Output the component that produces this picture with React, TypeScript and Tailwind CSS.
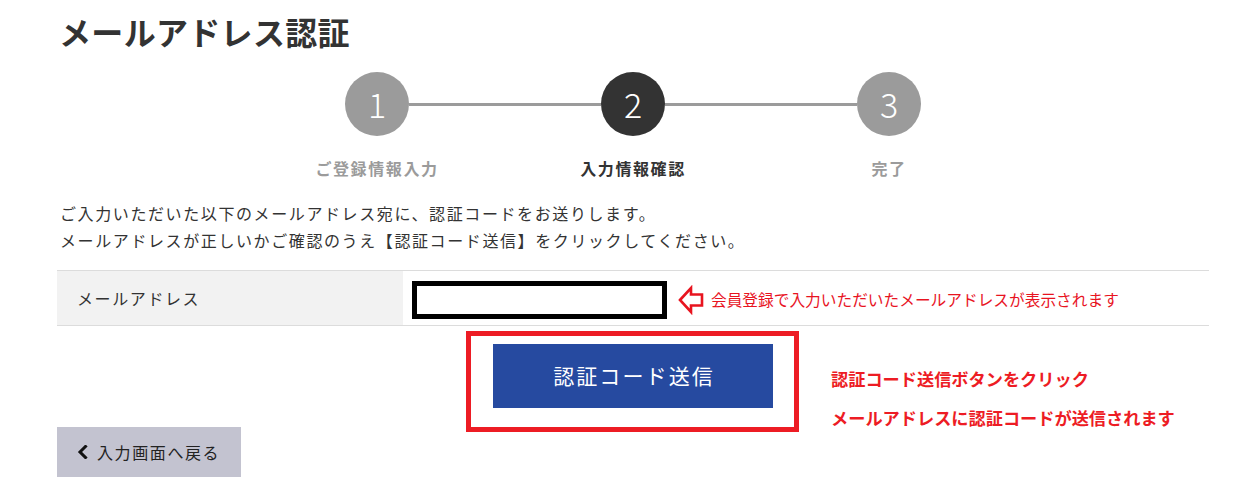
import React from "react";

const jp = { fontFamily: '"Noto Sans CJK JP", "Noto Sans", sans-serif' };

function Circle({ n, active }: { n: number; active?: boolean }) {
  return (
    <div
      className={`flex h-[64px] w-[64px] shrink-0 items-center justify-center rounded-full text-[34px] font-light leading-none text-white ${
        active ? "bg-[#333333]" : "bg-[#9b9b9b]"
      }`}
    >
      {n}
    </div>
  );
}

export default function App() {
  return (
    <div className="min-h-[496px] bg-white text-[#333333]" style={jp}>
      <div className="ml-[57px] w-[1152px]">
        <h1 className="pl-[2px] pt-[15px] text-[32px] font-bold leading-[32px] tracking-[0.01em] text-[#333333]">
          メールアドレス認証
        </h1>

        {/* steps */}
        <div className="mt-[25px] flex items-center justify-center">
          <Circle n={1} />
          <div className="h-[3px] w-[192px] bg-[#9b9b9b]" />
          <Circle n={2} active />
          <div className="h-[3px] w-[192px] bg-[#9b9b9b]" />
          <Circle n={3} />
        </div>
        <div className="mt-[20px] flex justify-center">
          <div className="grid w-[768px] grid-cols-3 text-center text-[16px] font-bold leading-[24px] tracking-[0.1em]">
            <div className="text-[#9b9b9b]">ご登録情報入力</div>
            <div className="text-[#333333]">入力情報確認</div>
            <div className="text-[#9b9b9b]">完了</div>
          </div>
        </div>

        <p className="mt-[20px] pl-[3px] text-[16px] leading-[27px] tracking-[0.1em] text-[#333333]">
          ご入力いただいた以下のメールアドレス宛に、認証コードをお送りします。
          <br />
          メールアドレスが正しいかご確認のうえ【認証コード送信】をクリックしてください。
        </p>

        {/* table */}
        <div className="mt-[16px] flex h-[56px] border-y border-[#dcdcdc]">
          <div className="flex w-[346px] items-center bg-[#f2f2f2] pl-[20px] text-[16px] tracking-[0.1em] text-[#333333]">
            メールアドレス
          </div>
          <div className="flex items-center pl-[9px] pt-[3px]">
            <div className="h-[38px] w-[255px] border-[5px] border-black bg-white" />
            <svg
              className="ml-[11px]"
              width="26"
              height="30"
              viewBox="0 0 26 30"
              fill="none"
            >
              <polygon
                points="2,15 13,3 13,9.5 24,9.5 24,20.5 13,20.5 13,27"
                stroke="#e8141f"
                strokeWidth="2.6"
                strokeLinejoin="miter"
              />
            </svg>
            <span className="ml-[7px] text-[15.7px] leading-none text-[#e8141f]">
              会員登録で入力いただいたメールアドレスが表示されます
            </span>
          </div>
        </div>

        {/* send button */}
        <div className="mt-[18px] flex justify-center">
          <div className="relative">
            <button className="flex h-[64px] w-[280px] items-center justify-center bg-[#264aa0] pl-[2px] text-[21px] tracking-[0.1em] text-white">
              認証コード送信
            </button>
            <div className="pointer-events-none absolute -bottom-[24px] -left-[27px] -right-[26px] -top-[13px] border-[5px] border-[#ed1c24]" />
            <div className="absolute left-[calc(100%+58px)] top-[15px] whitespace-nowrap text-[17.2px] font-bold leading-[39px] text-[#ed1c24]">
              <div>認証コード送信ボタンをクリック</div>
              <div>メールアドレスに認証コードが送信されます</div>
            </div>
          </div>
        </div>

        {/* back */}
        <button className="mt-[19px] flex h-[50px] w-[184px] items-center bg-[#c3c3d0] pl-[20px] text-[16px] tracking-[0.1em] text-[#222222]">
          <svg width="11" height="14" viewBox="0 0 11 14" fill="none">
            <polyline
              points="8.5,1.5 3,7 8.5,12.5"
              stroke="#111111"
              strokeWidth="3"
              strokeLinecap="square"
            />
          </svg>
          <span className="ml-[9px]">入力画面へ戻る</span>
        </button>
      </div>
    </div>
  );
}
